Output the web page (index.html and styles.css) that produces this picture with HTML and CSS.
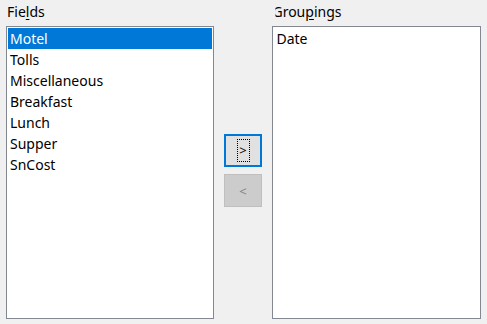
FILE: index.html
```html
<!DOCTYPE html>
<html>
<head>
<meta charset="utf-8">
<link rel="stylesheet" href="styles.css">
</head>
<body>
<div class="dialog">
  <div class="col col-left">
    <div class="label">Fie<u>l</u>ds</div>
    <div class="listbox">
      <div class="item selected">Motel</div>
      <div class="item">Tolls</div>
      <div class="item">Miscellaneous</div>
      <div class="item">Breakfast</div>
      <div class="item">Lunch</div>
      <div class="item">Supper</div>
      <div class="item">SnCost</div>
    </div>
  </div>
  <div class="mid">
    <button class="btn focused"><span class="focus">&gt;</span></button>
    <button class="btn disabled">&lt;</button>
  </div>
  <div class="col col-right">
    <div class="label label-clip">Grou<u>p</u>ings</div>
    <div class="listbox">
      <div class="item">Date</div>
    </div>
  </div>
</div>
</body>
</html>
```

FILE: styles.css
```css
html, body {
  margin: 0;
  padding: 0;
  background: #f0f0f0;
  width: 487px;
  height: 324px;
  overflow: hidden;
}
.dialog {
  display: flex;
  padding: 2px 6px 5px 6px;
  height: 324px;
  box-sizing: border-box;
  font-family: "Noto Sans", "Open Sans", sans-serif;
  font-size: 14px;
  color: #000;
}
.col {
  display: flex;
  flex-direction: column;
}
.col-left { width: 208px; }
.col-right { width: 209px; }
.label {
  height: 24px;
  line-height: 20px;
  padding-left: 1px;
}
.label u { text-decoration: underline; text-underline-offset: 2px; }
.label-clip {
  padding-left: 0;
  clip-path: inset(0 0 0 3px);
}
.listbox {
  flex: 1;
  background: #fff;
  border: 1px solid #828790;
  padding: 1px;
}
.item {
  height: 21px;
  line-height: 21px;
  padding-left: 2px;
}
.item.selected {
  background: #0078d7;
  color: #fff;
}
.mid {
  width: 59px;
  display: flex;
  flex-direction: column;
  align-items: center;
  padding-top: 132px;
  gap: 7px;
}
.btn {
  width: 38px;
  height: 33px;
  box-sizing: border-box;
  font-family: "Noto Sans", sans-serif;
  font-size: 13px;
  display: flex;
  align-items: center;
  justify-content: center;
  padding: 0;
}
.btn.focused {
  background: #e1e1e1;
  border: 2px solid #0078d7;
  color: #000;
}
.focus {
  display: inline-block;
  width: 11px;
  height: 21px;
  line-height: 21px;
  border: 1px dotted #000;
  text-align: center;
}
.btn.disabled {
  background: #cccccc;
  border: 1px solid #bfbfbf;
  color: #838383;
}
```
